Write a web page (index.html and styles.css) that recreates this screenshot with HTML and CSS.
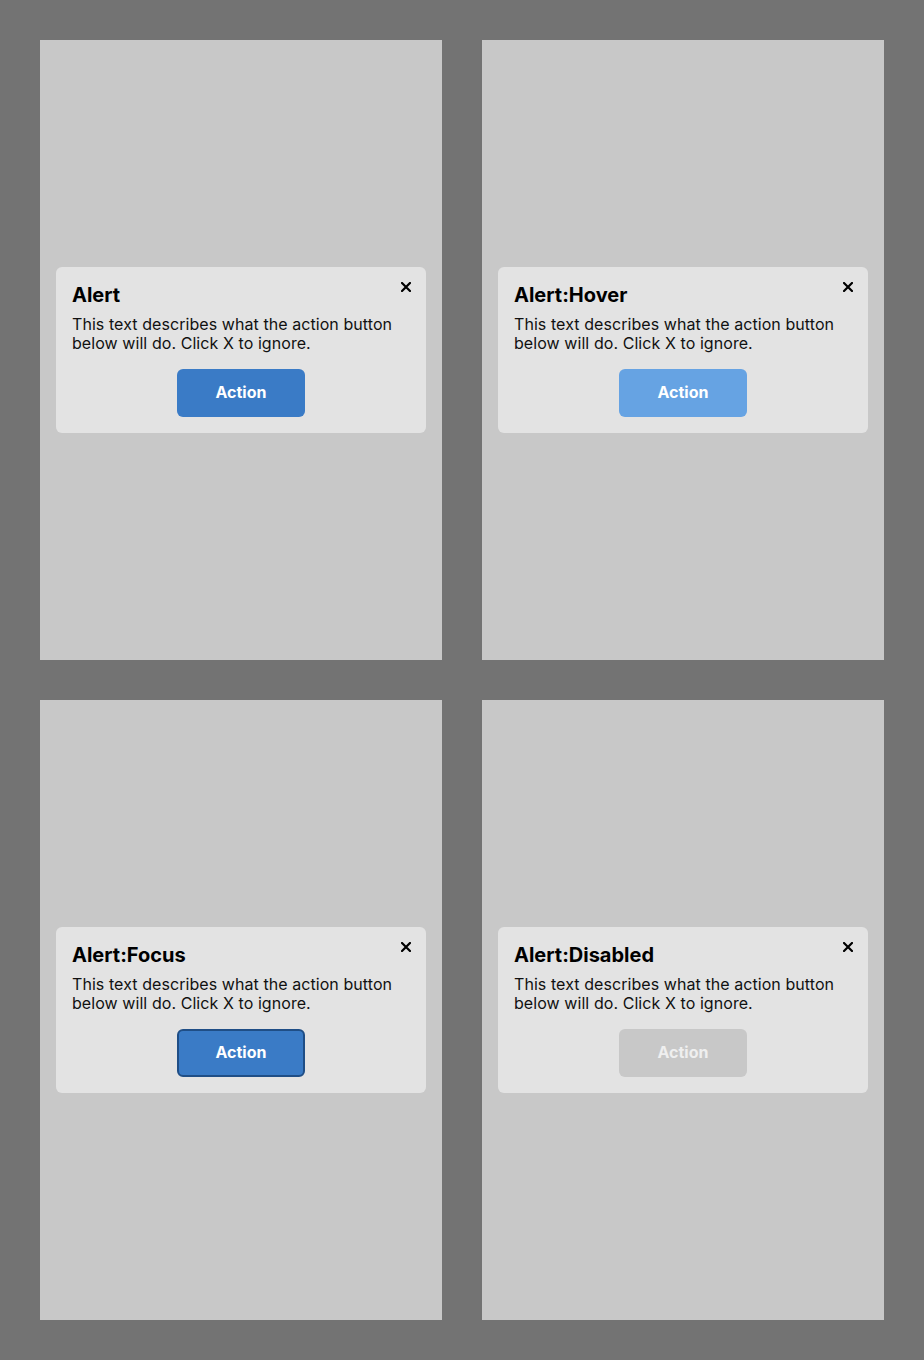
FILE: index.html
```html
<!DOCTYPE html>
<html>
<head>
<meta charset="utf-8">
<link rel="stylesheet" href="styles.css">
</head>
<body>
<div class="grid">
  <div class="panel">
    <div class="card">
      <button class="close" aria-label="Close"><svg viewBox="0 0 10 10" width="10" height="10"><path d="M1 1L9 9M9 1L1 9" stroke="#000" stroke-width="2.2" stroke-linecap="square"/></svg></button>
      <h2 class="title">Alert</h2>
      <p class="text">This text describes what the action button below will do. Click X to ignore.</p>
      <div class="actions"><button class="btn">Action</button></div>
    </div>
  </div>
  <div class="panel">
    <div class="card">
      <button class="close" aria-label="Close"><svg viewBox="0 0 10 10" width="10" height="10"><path d="M1 1L9 9M9 1L1 9" stroke="#000" stroke-width="2.2" stroke-linecap="square"/></svg></button>
      <h2 class="title">Alert:Hover</h2>
      <p class="text">This text describes what the action button below will do. Click X to ignore.</p>
      <div class="actions"><button class="btn btn-hover">Action</button></div>
    </div>
  </div>
  <div class="panel">
    <div class="card">
      <button class="close" aria-label="Close"><svg viewBox="0 0 10 10" width="10" height="10"><path d="M1 1L9 9M9 1L1 9" stroke="#000" stroke-width="2.2" stroke-linecap="square"/></svg></button>
      <h2 class="title">Alert:Focus</h2>
      <p class="text">This text describes what the action button below will do. Click X to ignore.</p>
      <div class="actions"><button class="btn btn-focus">Action</button></div>
    </div>
  </div>
  <div class="panel">
    <div class="card">
      <button class="close" aria-label="Close"><svg viewBox="0 0 10 10" width="10" height="10"><path d="M1 1L9 9M9 1L1 9" stroke="#000" stroke-width="2.2" stroke-linecap="square"/></svg></button>
      <h2 class="title">Alert:Disabled</h2>
      <p class="text">This text describes what the action button below will do. Click X to ignore.</p>
      <div class="actions"><button class="btn btn-disabled" disabled>Action</button></div>
    </div>
  </div>
</div>
</body>
</html>
```
FILE: styles.css
```css
html, body {
  margin: 0;
  padding: 0;
  background: #737373;
  font-family: Inter, "Noto Sans", sans-serif;
}
.grid {
  display: grid;
  grid-template-columns: 402px 402px;
  grid-auto-rows: 620px;
  gap: 40px;
  padding: 40px;
}
.panel {
  background: #c8c8c8;
  display: flex;
  align-items: center;
  padding: 0 16px;
}
.card {
  position: relative;
  width: 100%;
  background: #e3e3e3;
  border-radius: 6px;
  padding: 16px;
  box-sizing: border-box;
}
.close {
  position: absolute;
  top: 15px;
  right: 15px;
  width: 10px;
  height: 10px;
  padding: 0;
  border: 0;
  background: none;
  display: block;
}
.close svg { display: block; }
.title {
  margin: 0;
  font-size: 20px;
  line-height: 24px;
  font-weight: 700;
  color: #000;
}
.text {
  margin: 8px 0 0;
  font-size: 16px;
  line-height: 19px;
  letter-spacing: 0.07px;
  color: #111;
}
.actions {
  display: flex;
  justify-content: center;
  margin-top: 16px;
}
.btn {
  width: 128px;
  height: 48px;
  border: 0;
  border-radius: 6px;
  background: #3a7bc6;
  color: #fff;
  font-family: Inter, "Noto Sans", sans-serif;
  font-size: 16px;
  font-weight: 700;
  line-height: 19px;
  padding: 0 0 1px;
  box-sizing: border-box;
}
.btn-hover { background: #66a3e3; }
.btn-focus { border: 2px solid #1f4e86; }
.btn-disabled { background: #c8c8c8; color: #efefef; }
```
